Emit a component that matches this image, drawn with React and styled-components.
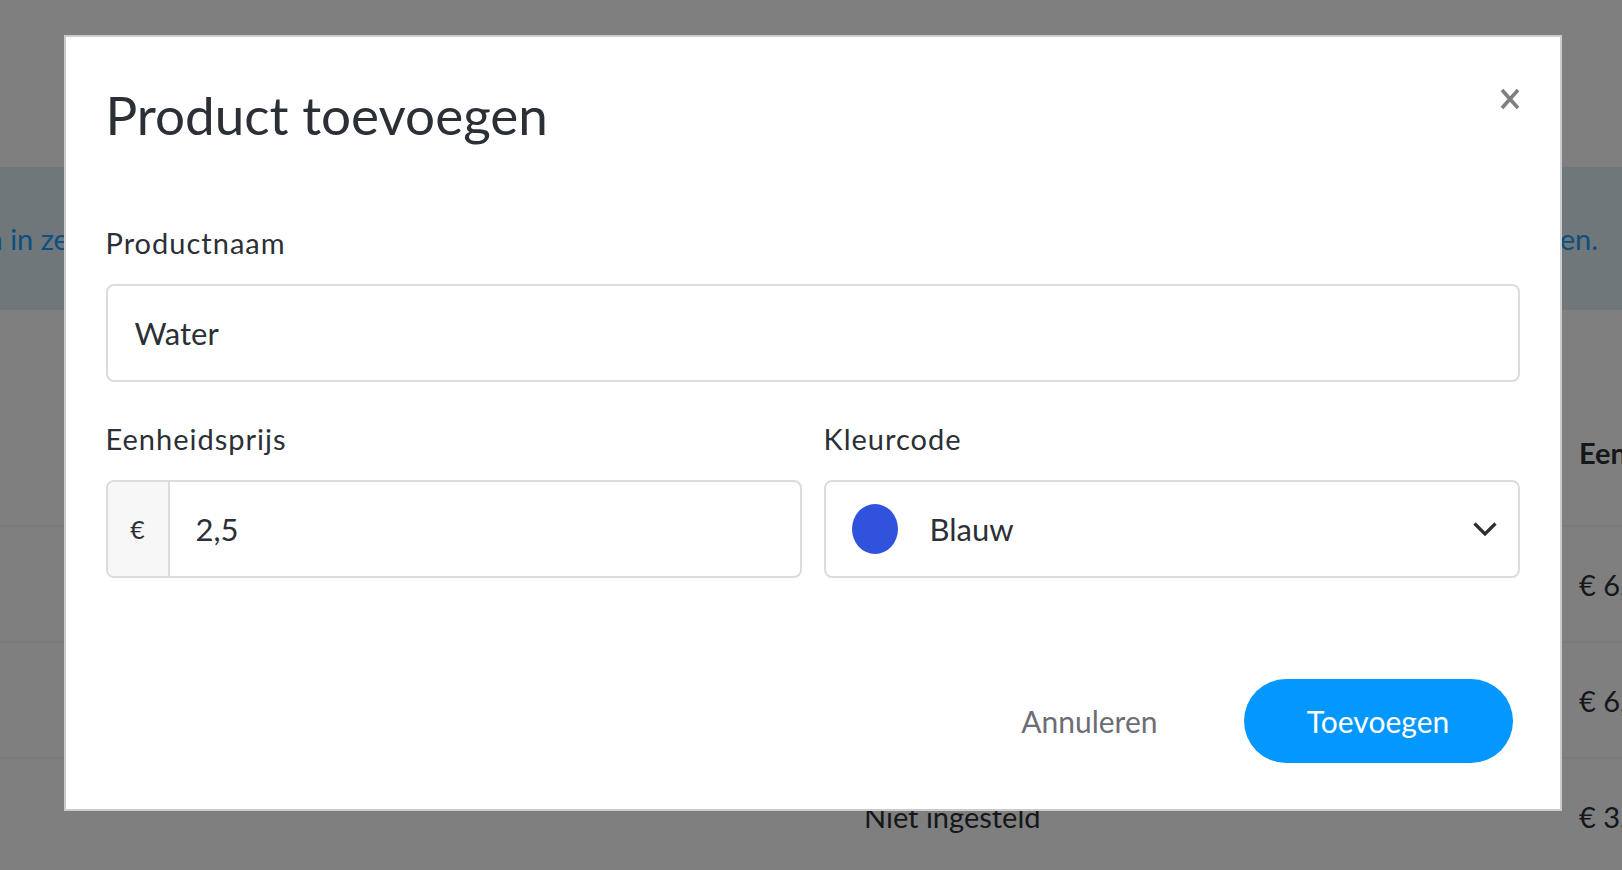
import React from "react";
import styled, { createGlobalStyle } from "styled-components";

const GlobalStyle = createGlobalStyle`
  html, body {
    margin: 0;
    padding: 0;
    background: #ffffff;
  }
  body {
    font-family: "Lato", "Noto Sans", sans-serif;
    color: #2b2f36;
  }
  * {
    box-sizing: border-box;
  }
`;

const Page = styled.div`
  height: 870px;
  overflow: hidden;
  background: #ffffff;
`;

const TopBar = styled.div`
  height: 167px;
`;

const Banner = styled.div`
  height: 143px;
  background: #deeef6;
  display: flex;
  align-items: center;
  justify-content: flex-end;
  padding-right: 24px;
  overflow: hidden;
  white-space: nowrap;
  font-size: 29px;
  color: #1a9eff;
`;

const Table = styled.div`
  display: grid;
  grid-template-columns: 864px 715px 1fr;
  padding-top: 125px;
  font-size: 29px;
  white-space: nowrap;
`;

const HeadCell = styled.div`
  font-weight: 700;
  padding-bottom: 55px;
`;

const Cell = styled.div`
  height: 116px;
  display: flex;
  align-items: center;
  border-top: 2px solid #f4f4f4;
`;

const Overlay = styled.div`
  position: fixed;
  inset: 0;
  background: rgba(0, 0, 0, 0.5);
  display: flex;
  justify-content: center;
  align-items: flex-start;
  padding: 35px 0 0 3px;
`;

const Modal = styled.div`
  width: 1498px;
  background: #ffffff;
  border: 2px solid rgba(0, 0, 0, 0.2);
  padding: 46px 40px 46px 40px;
`;

const Header = styled.div`
  display: flex;
  justify-content: space-between;
  align-items: flex-start;
`;

const Title = styled.h2`
  margin: 0;
  font-size: 53px;
  line-height: 64px;
  font-weight: 400;
  color: #2b2f36;
`;

const CloseButton = styled.button`
  border: 0;
  background: none;
  padding: 0;
  margin-top: 5px;
  width: 20px;
  height: 22px;
  display: flex;
  cursor: pointer;
`;

const Form = styled.form`
  display: flex;
  flex-direction: column;
  gap: 39px;
  margin-top: 78px;
`;

const Field = styled.div`
  display: flex;
  flex-direction: column;
  gap: 23px;
`;

const Label = styled.label`
  font-size: 29px;
  line-height: 36px;
  letter-spacing: 1px;
  color: #2b2f36;
`;

const Row = styled.div`
  display: grid;
  grid-template-columns: 1fr 1fr;
  gap: 22px;
`;

const Box = styled.div`
  height: 98px;
  border: 2px solid #dcdcdc;
  border-radius: 8px;
  display: flex;
  align-items: stretch;
  background: #ffffff;
  overflow: hidden;
`;

const TextInput = styled.input`
  flex: 1;
  min-width: 0;
  border: 0;
  outline: none;
  background: transparent;
  padding: 0 0 0 ${(p) => p.$indent || 27}px;
  font-family: inherit;
  font-size: 31px;
  color: #2b2f36;
`;

const Addon = styled.span`
  width: 62px;
  flex: none;
  display: flex;
  align-items: center;
  justify-content: center;
  background: #f7f7f7;
  border-right: 2px solid #dcdcdc;
  font-size: 25px;
  color: #2b2f36;
`;

const Select = styled.div`
  flex: 1;
  display: flex;
  align-items: center;
  padding: 0 21px 0 26px;
  cursor: pointer;
`;

const Swatch = styled.span`
  width: 46px;
  height: 50px;
  border-radius: 50%;
  background: ${(p) => p.$color};
  flex: none;
`;

const SelectText = styled.span`
  flex: 1;
  margin-left: 32px;
  font-size: 31px;
  color: #2b2f36;
`;

const Footer = styled.div`
  display: flex;
  justify-content: flex-end;
  align-items: center;
  gap: 44px;
  margin-top: 62px;
  padding-right: 7px;
`;

const TextButton = styled.button`
  border: 0;
  background: none;
  padding: 0;
  font-family: inherit;
  font-size: 30px;
  color: #6b6e75;
  cursor: pointer;
`;

const Cancel = styled(TextButton)`
  padding: 0 42px;
`;

const PrimaryButton = styled.button`
  width: 269px;
  height: 84px;
  border: 0;
  border-radius: 42px;
  background: #0497fe;
  color: #ffffff;
  font-family: inherit;
  font-size: 30px;
  cursor: pointer;
`;

const CloseIcon = () => (
  <svg width="20" height="22" viewBox="0 0 20 22">
    <path d="M2 2 L18 20 M18 2 L2 20" stroke="#7f7f7f" strokeWidth="3.6" fill="none" />
  </svg>
);

const Chevron = () => (
  <svg width="24" height="14" viewBox="0 0 24 14">
    <path d="M1.5 1.5 L12 12 L22.5 1.5" stroke="#2b2f36" strokeWidth="3.2" fill="none" />
  </svg>
);

const rows = [
  { id: 1, color: "Rood", price: "€ 6,00" },
  { id: 2, color: "Geel", price: "€ 6,50" },
  { id: 3, color: "Niet ingesteld", price: "€ 3,00" },
];

export default function App() {
  return (
    <>
      <GlobalStyle />
      <Page>
        <TopBar />
        <Banner>
          Sleep de producten in zelfgekozen volgorde op de kassa. Klik op een product om de naam, kleur of de
          prijs te bewerken, of om het te verwijderen.
        </Banner>
        <Table>
          <HeadCell />
          <HeadCell>Kleurcode</HeadCell>
          <HeadCell>Eenheidsprijs</HeadCell>
          {rows.map((r) => (
            <React.Fragment key={r.id}>
              <Cell />
              <Cell>{r.color}</Cell>
              <Cell>{r.price}</Cell>
            </React.Fragment>
          ))}
        </Table>
      </Page>
      <Overlay>
        <Modal>
          <Header>
            <Title>Product toevoegen</Title>
            <CloseButton type="button" aria-label="Sluiten">
              <CloseIcon />
            </CloseButton>
          </Header>
          <Form onSubmit={(e) => e.preventDefault()}>
            <Field>
              <Label htmlFor="naam">Productnaam</Label>
              <Box>
                <TextInput id="naam" defaultValue="Water" />
              </Box>
            </Field>
            <Row>
              <Field>
                <Label htmlFor="prijs">Eenheidsprijs</Label>
                <Box>
                  <Addon>€</Addon>
                  <TextInput id="prijs" $indent={26} defaultValue="2,5" />
                </Box>
              </Field>
              <Field>
                <Label>Kleurcode</Label>
                <Box>
                  <Select>
                    <Swatch $color="#3052dd" />
                    <SelectText>Blauw</SelectText>
                    <Chevron />
                  </Select>
                </Box>
              </Field>
            </Row>
            <Footer>
              <Cancel type="button">Annuleren</Cancel>
              <PrimaryButton type="submit">Toevoegen</PrimaryButton>
            </Footer>
          </Form>
        </Modal>
      </Overlay>
    </>
  );
}
